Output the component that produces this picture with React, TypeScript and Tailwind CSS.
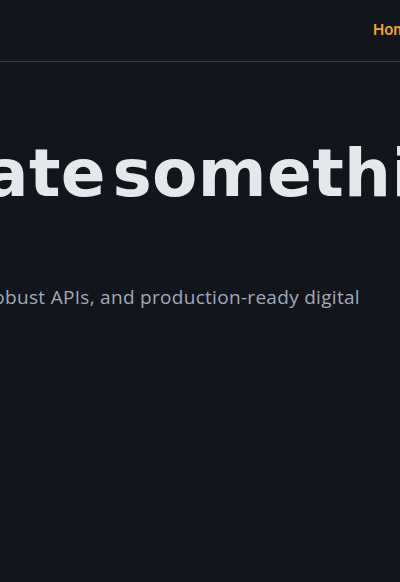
import React from "react";

export default function App() {
  return (
    <div className="min-h-[582px] w-full overflow-hidden bg-[#12151c]">
      <header className="flex h-[62px] items-center overflow-hidden whitespace-nowrap border-b border-[#3b3d4c] pl-[373px]">
        <nav className="flex gap-8 text-[15px] font-semibold text-[#f5a524] [font-family:'Inter',sans-serif]">
          <a>Home</a>
          <a>Services</a>
          <a>Work</a>
          <a>Contact</a>
        </nav>
      </header>
      <main className="flex flex-col overflow-hidden">
        <div className="mt-[79px] flex w-full overflow-hidden">
          <h1 className="ml-[-143px] shrink-0 whitespace-nowrap text-[66px] font-bold leading-[66px] tracking-[0.4px] [word-spacing:-17px] text-[#e5e7eb] [font-family:'DejaVu_Sans',sans-serif]">
            Create something
          </h1>
        </div>
        <div className="mt-[76px] flex w-full overflow-hidden">
          <p className="ml-[-194px] shrink-0 whitespace-nowrap text-[19px] leading-[28px] tracking-[0.3px] text-[#a1a9b8] [font-family:'Open_Sans',sans-serif]">
            Scalable platforms, robust APIs, and production-ready digital
          </p>
        </div>
      </main>
    </div>
  );
}
